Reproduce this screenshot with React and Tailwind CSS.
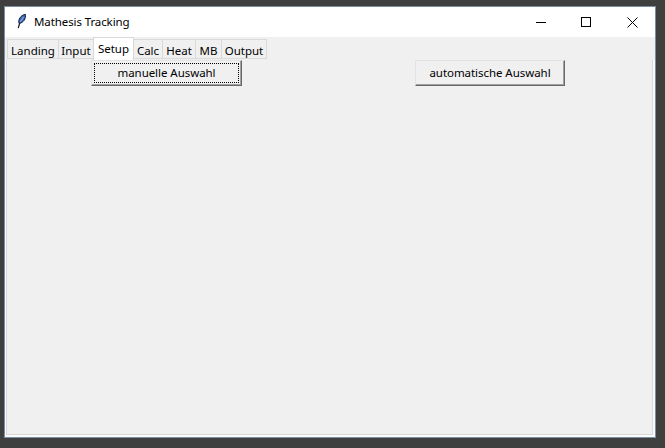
import React from "react";

const tabs = [
  { label: "Landing", width: "w-[52px]" },
  { label: "Input", width: "w-[36px]" },
  { label: "Setup", width: "w-[41px]", active: true },
  { label: "Calc", width: "w-[30px]" },
  { label: "Heat", width: "w-[34px]" },
  { label: "MB", width: "w-[27px]" },
  { label: "Output", width: "w-[46px]" },
];

const Feather = () => (
  <svg width="11" height="16" viewBox="0 0 12 18" fill="none">
    <path d="M1.5 17.5 L4 9" stroke="#000" strokeWidth="1.3" />
    <path d="M2.5 12 C1 8 4 2 10 1 C11 6 8 11 2.5 12 Z" fill="#3d68b5" stroke="#0b1430" strokeWidth="1.1" />
    <path d="M4 10 L8 4" stroke="#a9c8ee" strokeWidth="1" />
  </svg>
);

const App = () => {
  return (
    <div className="w-[665px] h-[448px] bg-[#3f3f3f] pt-[6px] pl-[4px] font-['Noto_Sans',sans-serif] text-[11.5px] text-black overflow-hidden">
      <div className="w-[652px] h-[432px] border border-[#7c8ea3] bg-[#fafafa] flex flex-col">
        {/* Title bar */}
        <div className="h-[30px] bg-white flex items-center shrink-0">
          <div className="ml-[12px] mb-[2px] w-[10px] flex"><Feather /></div>
          <span className="ml-[7px] tracking-[-0.1px]">Mathesis Tracking</span>
          <div className="ml-auto flex items-center">
            <div className="w-[46px] pl-[2px] flex justify-center"><div className="w-[10px] h-px bg-black" /></div>
            <div className="w-[46px] flex justify-center"><div className="w-[10px] h-[10px] border border-black" /></div>
            <div className="w-[46px] flex justify-center">
              <svg width="11" height="11" viewBox="0 0 11 11" stroke="#000" strokeWidth="1">
                <path d="M0.5 0.5 L10.5 10.5 M10.5 0.5 L0.5 10.5" />
              </svg>
            </div>
          </div>
        </div>

        {/* Tabs */}
        <div className="h-[23px] pl-[2px] bg-[#f0f0f0] flex items-end shrink-0 relative z-10">
          {tabs.map((tab) => (
            <div
              key={tab.label}
              className={
                tab.active
                  ? `${tab.width} h-[23px] bg-white border border-b-0 border-[#d9d9d9] -mr-px relative z-10 flex justify-center pt-[3px] leading-[16px]`
                  : `${tab.width} h-[20px] bg-[#f0f0f0] border border-[#d9d9d9] -mr-px flex justify-center pt-[3px] leading-[16px] mb-px`
              }
            >
              {tab.label}
            </div>
          ))}
        </div>

        {/* Pane */}
        <div className="w-[647px] h-[376px] ml-[1px] -mt-px border border-[#d9d9d9] bg-[#f0f0f0] flex items-start">
          <button className="ml-[84px] w-[151px] h-[26px] bg-[#f0f0f0] border border-[#e3e3e3] border-r-[#696969] border-b-[#696969] shadow-[inset_-1px_-1px_0_#a0a0a0] outline-1 outline-dotted -outline-offset-4 outline-black flex items-center justify-center tracking-[-0.05px]">
            manuelle Auswahl
          </button>
          <button className="ml-[173px] w-[150px] h-[26px] bg-[#f0f0f0] border border-[#e3e3e3] border-r-[#696969] border-b-[#696969] shadow-[inset_-1px_-1px_0_#a0a0a0] flex items-center justify-center tracking-[-0.05px]">
            automatische Auswahl
          </button>
        </div>
      </div>
    </div>
  );
};

export default App;
